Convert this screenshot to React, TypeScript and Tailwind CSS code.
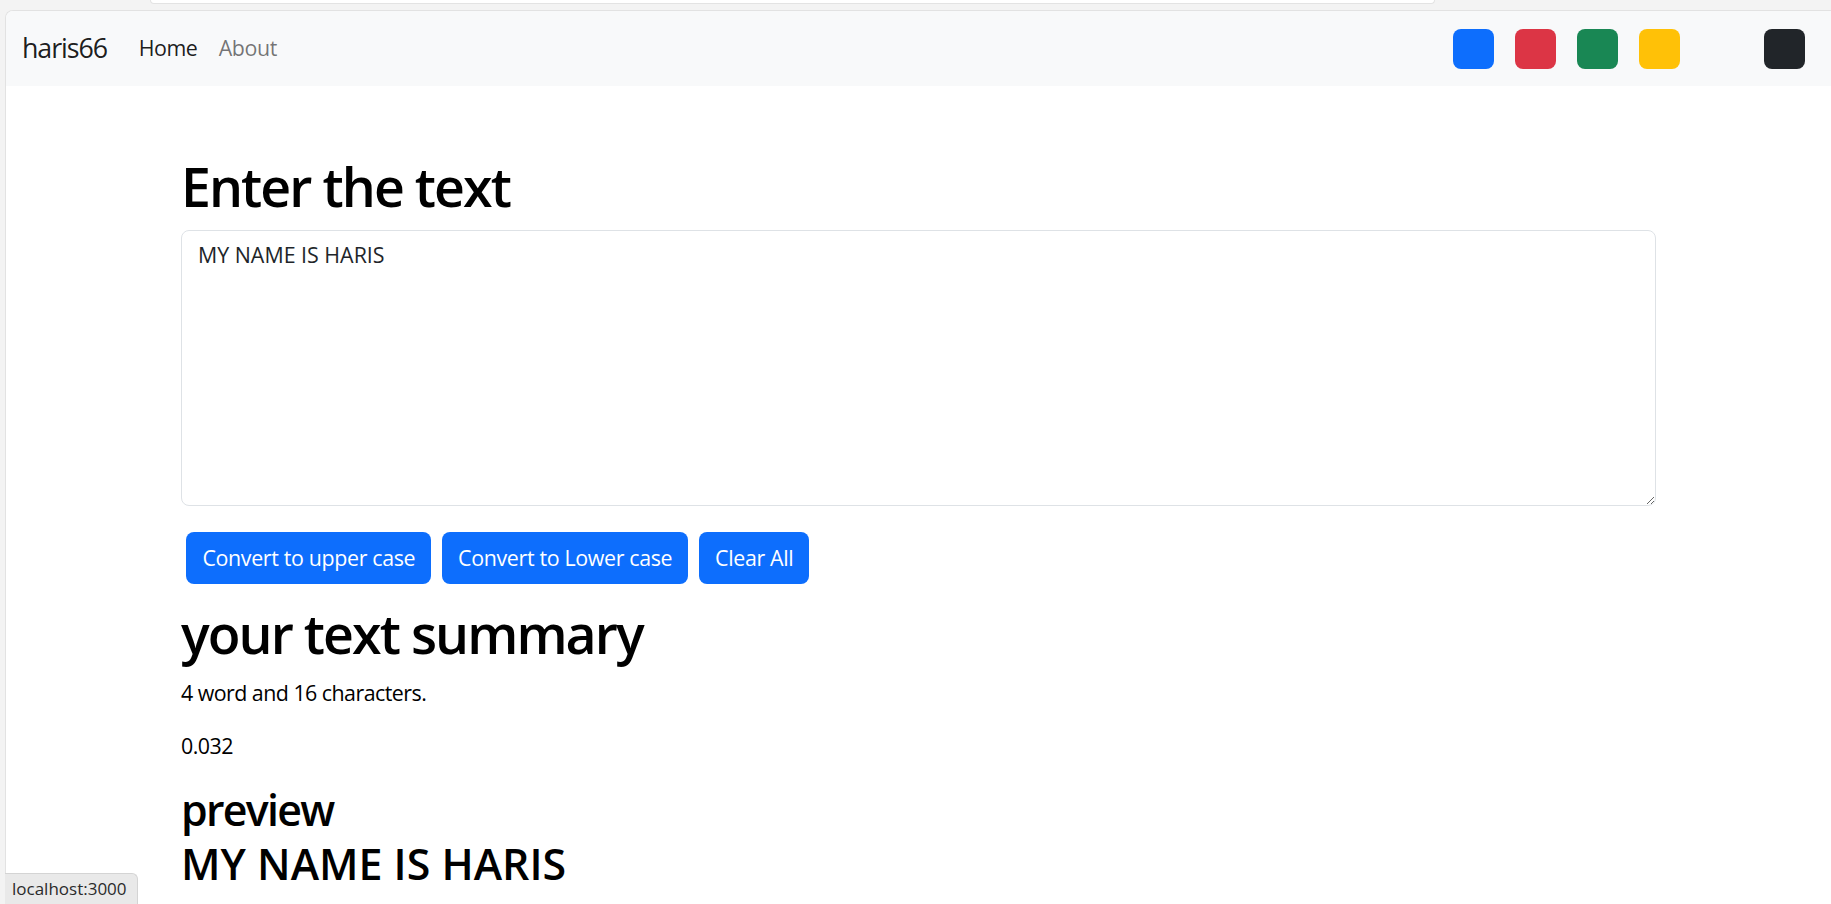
import React from "react";

export default function App() {
  const font = { fontFamily: '"Open Sans", "Noto Sans", sans-serif' };
  const btn =
    "mx-[5.4px] my-[5.4px] h-[52px] px-[16px] rounded-[8px] bg-[#0d6efd] text-white text-[21.4px] tracking-[-0.016em]";
  return (
    <div
      className="relative w-[1831px] h-[904px] overflow-hidden bg-[#f3f3f3]"
      style={font}
    >
      {/* browser chrome strip */}
      <div className="h-[10px] pl-[150px]">
        <div className="w-[1285px] h-[4px] bg-white rounded-b-[10px] border-b border-x border-[#e3e3e3]" />
      </div>
      {/* page frame */}
      <div className="ml-[5px] h-[894px] bg-white border-l border-t border-[#e2e2e2] rounded-tl-[8px] overflow-hidden">
        {/* navbar */}
        <nav className="h-[75px] bg-[#f8f9fa] flex items-center pl-[16px] pr-[26px]">
          <span className="text-[26.8px] tracking-[-0.04em] text-[rgba(0,0,0,0.9)] mr-[21px]">haris66</span>
          <a className="text-[21.4px] tracking-[-0.02em] px-[10.7px] text-[rgba(0,0,0,0.9)]">Home</a>
          <a className="text-[21.4px] tracking-[-0.02em] px-[10.7px] text-[rgba(0,0,0,0.55)]">About</a>
          <div className="ml-auto flex items-center gap-[21px]">
            <div className="w-[41px] h-[40px] rounded-[8px] bg-[#0d6efd]" />
            <div className="w-[41px] h-[40px] rounded-[8px] bg-[#dc3545]" />
            <div className="w-[41px] h-[40px] rounded-[8px] bg-[#198754]" />
            <div className="w-[41px] h-[40px] rounded-[8px] bg-[#ffc107]" />
            <div className="w-[41px] h-[40px] rounded-[8px] bg-[#212529] ml-[63px]" />
          </div>
        </nav>

        {/* main */}
        <div className="w-[1475px] mx-auto text-[#212529]">
          <h1 className="mt-[69px] text-[53.6px] leading-[64px] font-semibold tracking-[-0.036em] text-black mb-[11px]">
            Enter the text
          </h1>
          <textarea
            className="block w-full h-[276px] border border-[#dee2e6] rounded-[8px] px-[16px] py-[8px] text-[21.4px] leading-[32px] text-[#212529] resize-y outline-none"
            defaultValue="MY NAME IS HARIS"
          />
          <div className="mt-[21px] flex">
            <button className={btn}>Convert to upper case</button>
            <button className={btn}>Convert to Lower case</button>
            <button className={btn}>Clear All</button>
          </div>
          <h1 className="mt-[12px] text-[53.6px] leading-[64px] font-semibold tracking-[-0.036em] text-black mb-[11px]">
            your text summary
          </h1>
          <p className="text-[21.4px] leading-[32px] tracking-[-0.025em] text-black mb-[21.4px]">4 word and 16 characters.</p>
          <p className="text-[21.4px] leading-[32px] tracking-[-0.025em] text-black mb-[21.4px]">0.032</p>
          <h2 className="text-[42.9px] leading-[51.5px] font-semibold tracking-[-0.04em] text-black mb-[3px]">preview</h2>
          <h2 className="text-[42.9px] leading-[51.5px] font-semibold text-black">MY NAME IS HARIS</h2>
        </div>
      </div>

      {/* status bubble */}
      <div className="absolute left-[5px] bottom-0 h-[31px] w-[133px] bg-[#e9e9e9] border-t border-r border-[#d4d4d4] rounded-tr-[6px] flex items-center pl-[7px] text-[17px] text-[#2b2b2b]">
        localhost:3000
      </div>
    </div>
  );
}
